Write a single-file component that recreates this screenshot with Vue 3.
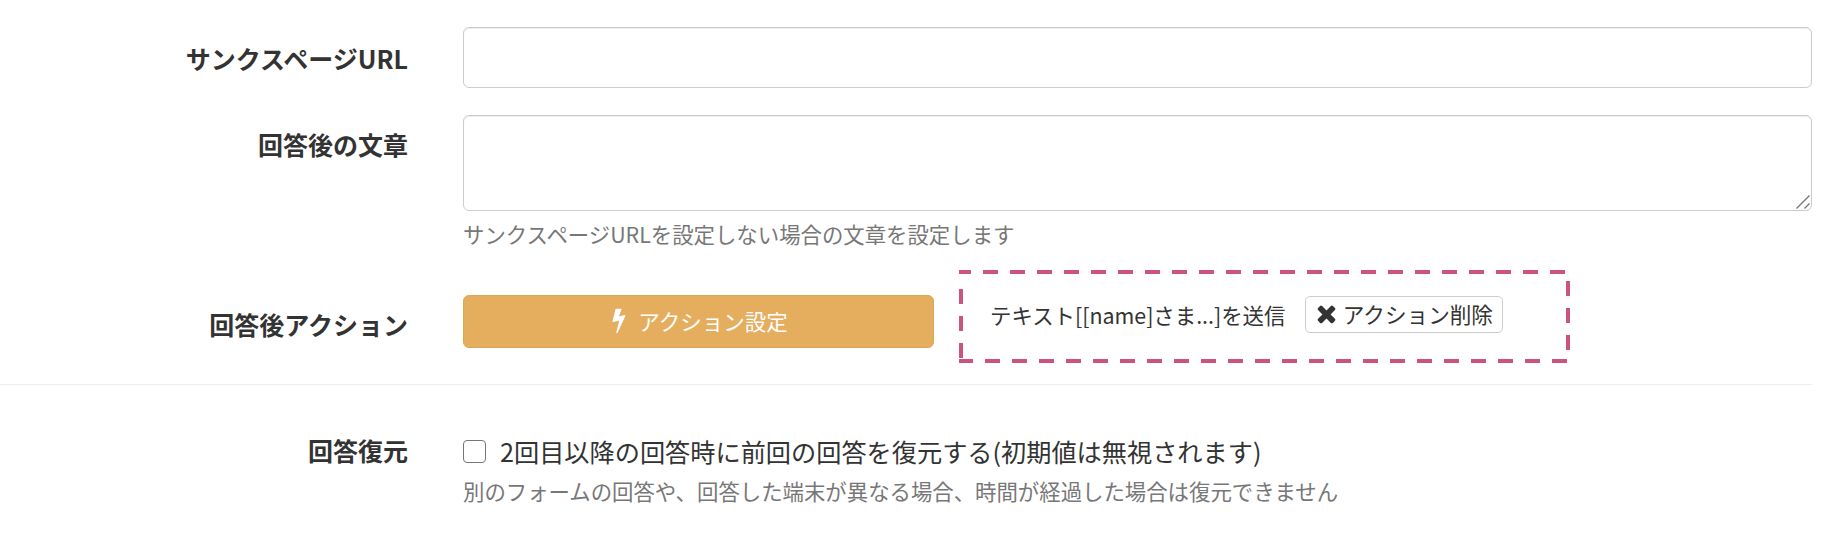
<template>
  <form class="settings">
    <div class="row row--url">
      <label class="row__label row__label--url">サンクスページURL</label>
      <div class="row__control">
        <input class="field field--input" type="text" />
      </div>
    </div>

    <div class="row row--text">
      <label class="row__label row__label--text">回答後の文章</label>
      <div class="row__control">
        <div class="area-wrap">
          <textarea class="field field--area"></textarea>
          <svg class="area-wrap__grip" viewBox="0 0 14 14" aria-hidden="true">
            <path d="M0.5 13.5 13.5 0.5M8.5 13.5 13.5 8.5" />
          </svg>
        </div>
        <p class="help help--text">サンクスページURLを設定しない場合の文章を設定します</p>
      </div>
    </div>

    <div class="row row--action">
      <label class="row__label row__label--action">回答後アクション</label>
      <div class="row__control action">
        <button type="button" class="btn-action">
          <svg class="btn-action__icon" viewBox="0 0 1792 1792" aria-hidden="true">
            <path :d="boltPath" />
          </svg>
          アクション設定
        </button>
        <div class="action__box">
          <span class="action__text">テキスト[[name]さま...]を送信</span>
          <button type="button" class="btn-remove">
            <svg class="btn-remove__icon" viewBox="0 0 1408 1792" aria-hidden="true">
              <path :d="timesPath" />
            </svg>
            アクション削除
          </button>
        </div>
      </div>
    </div>

    <div class="row row--restore">
      <label class="row__label row__label--restore">回答復元</label>
      <div class="row__control">
        <label class="check">
          <input class="check__box" type="checkbox" />
          <span>2回目以降の回答時に前回の回答を復元する(初期値は無視されます)</span>
        </label>
        <p class="help help--restore">別のフォームの回答や、回答した端末が異なる場合、時間が経過した場合は復元できません</p>
      </div>
    </div>
  </form>
</template>

<script setup>
const boltPath =
  'M1333 566q18 20 7 44l-540 1157q-13 25-42 25-4 0-14-2-17-5-25.500-19t-4.500-30l197-808-406 101q-4 1-12 1-18 0-31-11-18-15-13-39l201-825q4-14 16-23t28-9h328q19 0 32 12.500t13 29.500q0 8-5 18l-171 463 396-98q8-2 12-2 19 0 34 15z'
const timesPath =
  'M1298 1322q0 40-28 68l-136 136q-28 28-68 28t-68-28l-294-294-294 294q-28 28-68 28t-68-28l-136-136q-28-28-28-68t28-68l294-294-294-294q-28-28-28-68t28-68l136-136q28-28 68-28t68 28l294 294 294-294q28-28 68-28t68 28l136 136q28 28 28 68t-28 68l-294 294 294 294q28 28 28 68z'
</script>

<style scoped>
.settings {
  width: 1812px;
  height: 556px;
  padding-top: 27px;
  box-sizing: border-box;
  color: #333;
  font-family: "Noto Sans CJK JP", "Noto Sans", sans-serif;
}

.row {
  display: grid;
  grid-template-columns: 408px 1fr;
  column-gap: 55px;
}

.row--text {
  margin-top: 27px;
}

.row--action {
  margin-top: 21px;
  padding-bottom: 21px;
  border-bottom: 1px solid #eee;
}

.row--restore {
  margin-top: 50px;
}

.row__label {
  font-size: 25px;
  line-height: 32px;
  font-weight: 700;
  text-align: right;
  color: #333;
}

.row__label--url {
  padding-top: 15px;
}

.row__label--text {
  padding-top: 13px;
}

.row__label--action {
  padding-top: 38px;
}

.row__label--restore {
  margin-top: -1px;
}

.field {
  display: block;
  width: 100%;
  box-sizing: border-box;
  border: 1px solid #ccc;
  border-radius: 6px;
  background: #fff;
  box-shadow: inset 0 1px 1px rgba(0, 0, 0, 0.075);
}

.field--input {
  height: 61px;
}

.field--area {
  height: 96px;
  resize: none;
}

.area-wrap {
  position: relative;
}

.area-wrap__grip {
  position: absolute;
  right: 2px;
  bottom: 2px;
  width: 14px;
  height: 14px;
  fill: none;
  stroke: #777;
  stroke-width: 1.4;
}

.help {
  margin: 0;
  color: #777;
  font-size: 21.4px;
  line-height: 30px;
}

.help--text {
  margin-top: 8px;
}

.help--restore {
  margin-top: 9px;
}

.action {
  display: flex;
  align-items: flex-start;
  gap: 25px;
}

.btn-action {
  flex: none;
  width: 471px;
  height: 53px;
  margin-top: 25px;
  padding: 0 0 3px;
  display: flex;
  align-items: center;
  justify-content: center;
  gap: 9px;
  border: 1px solid #dda652;
  border-radius: 6px;
  background: #e5ae5e;
  color: #fff;
  font-family: inherit;
  font-size: 21.5px;
}

.btn-action__icon {
  width: 26px;
  height: 26px;
  margin-left: -3px;
  margin-right: -3px;
  fill: #fff;
}

/* dashes are 15px on, 12px off, which border-style: dashed can't give */
.action__box {
  width: 611px;
  height: 93px;
  box-sizing: border-box;
  padding: 0 0 4px 31px;
  display: flex;
  align-items: center;
  gap: 20px;
  background:
    linear-gradient(90deg, #cc5280 15px, transparent 15px) -3px 0 / 27px 4px repeat-x,
    linear-gradient(90deg, #cc5280 15px, transparent 15px) -1px 100% / 27px 4px repeat-x,
    linear-gradient(#cc5280 4px, transparent 4px) 0 0 / 4px 4px no-repeat,
    repeating-linear-gradient(180deg, #cc5280 0 15px, transparent 15px 27px) 0 19px / 4px 70px no-repeat,
    repeating-linear-gradient(180deg, #cc5280 0 15px, transparent 15px 27px) 100% 11px / 4px 69px no-repeat;
}

.action__text {
  font-size: 21.4px;
  color: #333;
  white-space: nowrap;
}

.btn-remove {
  flex: none;
  width: 198px;
  height: 37px;
  padding: 0 0 2px;
  display: flex;
  align-items: center;
  justify-content: center;
  gap: 6px;
  border: 1px solid #ccc;
  border-radius: 5px;
  background: #fff;
  color: #333;
  font-family: inherit;
  font-size: 21.6px;
}

.btn-remove__icon {
  width: 21px;
  height: 27px;
  fill: #333;
}

.check {
  display: flex;
  align-items: center;
  gap: 14px;
  height: 32px;
  font-size: 25.2px;
  white-space: nowrap;
}

.check__box {
  appearance: none;
  flex: none;
  width: 23px;
  height: 23px;
  margin: 0;
  border: 1.5px solid #777;
  border-radius: 4px;
  background: #fff;
}
</style>
